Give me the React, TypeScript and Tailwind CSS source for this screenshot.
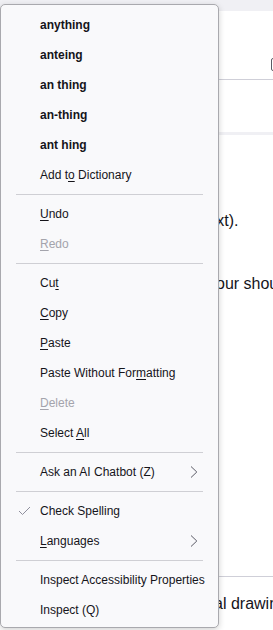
import React from 'react';

type Item = {
  label: React.ReactNode;
  bold?: boolean;
  disabled?: boolean;
  checked?: boolean;
  submenu?: boolean;
};

type Entry = Item | 'sep';

// access-key helper: underline one letter
function k(before: string, key: string, after: string) {
  return (
    <>
      {before}
      <u className="underline-offset-[2px]">{key}</u>
      {after}
    </>
  );
}

const entries: Entry[] = [
  { label: 'anything', bold: true },
  { label: 'anteing', bold: true },
  { label: 'an thing', bold: true },
  { label: 'an-thing', bold: true },
  { label: 'ant hing', bold: true },
  { label: k('Add t', 'o', ' Dictionary') },
  'sep',
  { label: k('', 'U', 'ndo') },
  { label: k('', 'R', 'edo'), disabled: true },
  'sep',
  { label: k('Cu', 't', '') },
  { label: k('', 'C', 'opy') },
  { label: k('', 'P', 'aste') },
  { label: k('Paste Without For', 'm', 'atting') },
  { label: k('', 'D', 'elete'), disabled: true },
  { label: k('Select ', 'A', 'll') },
  'sep',
  { label: 'Ask an AI Chatbot (Z)', submenu: true },
  'sep',
  { label: 'Check Spelling', checked: true },
  { label: k('', 'L', 'anguages'), submenu: true },
  'sep',
  { label: 'Inspect Accessibility Properties' },
  { label: 'Inspect (Q)' },
];

function MenuRow({ item }: { item: Item }) {
  return (
    <div
      className={`flex h-[30px] items-center pr-[20px] text-[12px] whitespace-nowrap ${
        item.disabled ? 'text-[#a4a4ac]' : 'text-[#15141a]'
      } ${item.bold ? 'font-bold' : ''}`}
    >
      <div className="flex w-[39px] shrink-0 items-center">
        {item.checked && (
          <svg className="ml-[17px]" width="13" height="10" viewBox="0 0 13 10" fill="none">
            <path d="M1 5 L4.5 8.5 L12 1" stroke="#8f8f9d" strokeWidth="1" />
          </svg>
        )}
      </div>
      <span className="flex-1">{item.label}</span>
      {item.submenu && (
        <svg width="8" height="12" viewBox="0 0 8 12" fill="none">
          <path d="M1 0.5 L6.8 6 L1 11.5" stroke="#5b5b66" strokeWidth="1" />
        </svg>
      )}
    </div>
  );
}

function ContextMenu() {
  return (
    <div className="absolute left-0 top-[4px] w-[219px] rounded-[5px] border border-[#a9a9ae] bg-[#f9f9fb] pt-[5px] pb-[2px] shadow-[0_2px_6px_rgba(0,0,0,0.18)]">
      {entries.map((e, i) =>
        e === 'sep' ? (
          <div key={i} className="flex h-[9px] items-center px-[15px]">
            <div className="h-px w-full bg-[#cfcfd4]" />
          </div>
        ) : (
          <MenuRow key={i} item={e} />
        )
      )}
    </div>
  );
}

export default function App() {
  return (
    <div className="relative h-[630px] w-[273px] overflow-hidden bg-white font-['Liberation_Sans',Arial,sans-serif] text-[#15141a]">
      {/* page behind the menu */}
      <div className="h-[11px] bg-[#f0f0f4]" />
      <div className="h-[69px] border-b border-[#cfcfd8] pt-[47px] pl-[271px]">
        <div className="h-[13px] w-[14px] rounded-[2px] border border-[#5b5b66]" />
      </div>
      <div className="h-[52px]" />
      <div className="h-[3px] bg-[#f0f0f4]" />
      <p className="mt-[74px] pl-[203px] text-[16px] leading-6 whitespace-nowrap">text).</p>
      <p className="mt-[39px] pl-[208px] text-[16px] leading-6 whitespace-nowrap">your should</p>
      <div className="mt-[280px] border-t border-[#cfcfd8]" />
      <p className="mt-[15px] pl-[214px] text-[16px] leading-6 whitespace-nowrap">al drawing</p>

      <ContextMenu />
    </div>
  );
}
